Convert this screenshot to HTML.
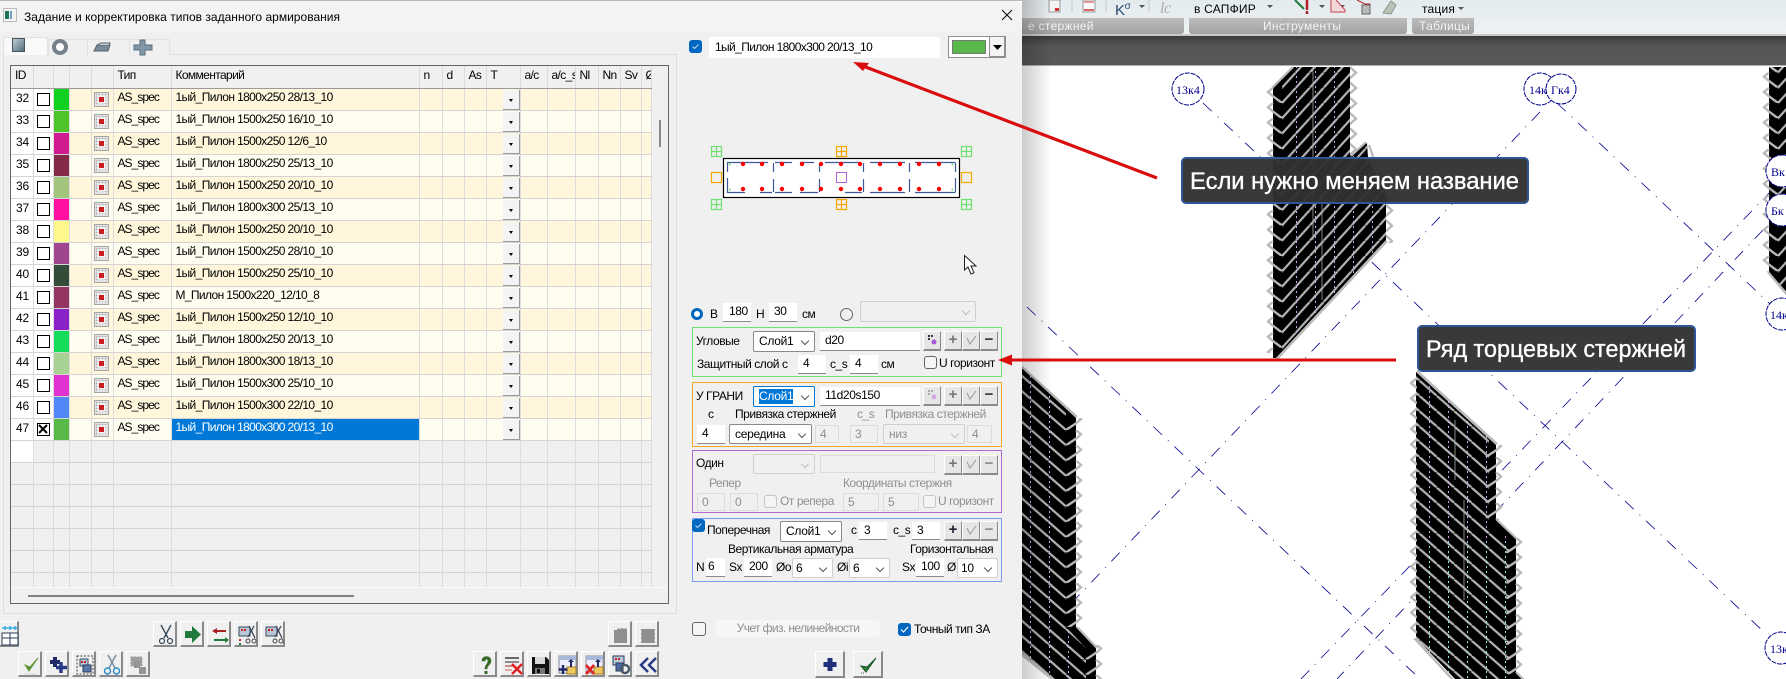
<!DOCTYPE html>
<html><head><meta charset="utf-8">
<style>
html,body{margin:0;padding:0;width:1786px;height:679px;overflow:hidden;background:#fff;font-family:"Liberation Sans","Noto Sans CJK SC",sans-serif;font-size:12px;color:#000}
.a{position:absolute}
.t{position:absolute;white-space:nowrap;line-height:14px;letter-spacing:-.45px}
.g{color:#8f8f8f}
.i{position:absolute;background:#fff;border-bottom:1px solid #8a8a8a;box-sizing:border-box;line-height:17px;padding-left:5px;white-space:nowrap;font-size:12px;letter-spacing:-.4px}
.d{position:absolute;background:#f0f0f0;border:1px solid #dcdcdc;box-sizing:border-box;line-height:17px;padding-left:4px;color:#8f8f8f;white-space:nowrap}
.c{position:absolute;background:#fff;border:1px solid #8a8a8a;border-radius:2px;box-sizing:border-box;line-height:19px;padding-left:5px;white-space:nowrap;letter-spacing:-.3px}
.c:after{content:"";position:absolute;right:6px;top:6px;width:5px;height:5px;border-right:1px solid #555;border-bottom:1px solid #555;transform:rotate(45deg)}
.c.o{background:#f0f0f0;border-color:#cfcfcf;color:#8f8f8f}
.c.o:after{border-color:#c0c0c0}
.b{position:absolute;background:#f0f0f0;box-sizing:border-box;border-top:1px solid #fff;border-left:1px solid #fff;border-right:2px solid #8a8a8a;border-bottom:2px solid #8a8a8a}
.b svg{position:absolute;left:0;top:0}
.s{position:absolute;background:#e6e6e6;box-sizing:border-box;border-top:1px solid #fff;border-left:1px solid #fff;border-right:1px solid #8a8a8a;border-bottom:2px solid #8a8a8a;text-align:center;font-weight:bold;line-height:16px;font-size:15px;color:#333}
.s.o{color:#a8a8a8}
.k{position:absolute;width:13px;height:13px;box-sizing:border-box;border:1px solid #666;border-radius:3px;background:#f5f5f5}
.k.o{border-color:#c4c4c4}
.on{position:absolute;width:13px;height:13px;border-radius:3px;background:#0067c0}
.on svg{position:absolute;left:0;top:0}
.box{position:absolute;left:692px;width:310px;box-sizing:border-box;border:1px solid}
table{position:absolute;left:11px;top:66px;width:640px;border-collapse:collapse;table-layout:fixed}
td{height:21px;padding:0;border-right:1px solid #dcdcdc;border-bottom:1px solid #d4d4d4;position:relative;white-space:nowrap;overflow:hidden;font-size:12px;letter-spacing:-.62px;line-height:14px;vertical-align:top;padding-top:1px;box-sizing:border-box}
tr{height:22px}
tr.h td{background:#f0f0f0;border-bottom:1px solid #9a9a9a;padding-left:4px;padding-top:2px}
tr.p td{background:#fff6dc}
tr.q td{background:#fffdef}
tr.e td{background:#f0f0f0;height:22px}
td.id{background:#fff!important;padding-left:5px;padding-top:2px;letter-spacing:-.2px}
td.w{background:#fff!important}
td.x{padding-left:4px}
td.y{padding-left:4px;letter-spacing:-.95px}
.cbx{position:absolute;left:3px;top:4px;width:13px;height:13px;box-sizing:border-box;border:1px solid #000;background:#fff}
.ic{position:absolute;left:2px;top:3px;width:15px;height:15px;box-sizing:border-box;border:1px solid #a6a6a6;background:radial-gradient(#a8a8a8 .7px,transparent .9px) 0 0/3px 3px,#e8e8e8}
.ic:after{content:"";position:absolute;left:4px;top:4px;width:4px;height:4px;padding:.5px;background:#c81e1e;box-shadow:0 0 0 1.500px #f2f2f2}
.dr{position:absolute;right:0;top:1px;width:17px;height:20px;box-sizing:border-box;background:#f4f4f4;border-right:1px solid #9a9a9a;border-bottom:1px solid #9a9a9a}
.dr:after{content:"";position:absolute;left:6px;top:9px;border-left:2.5px solid transparent;border-right:2.5px solid transparent;border-top:3px solid #000}
</style></head><body>

<!-- Toolbar -->
<div class="a" style="left:1022px;top:0;width:764px;height:35px;background:linear-gradient(#e4ebee,#edf2f3)"></div>
<div class="a" style="left:1000px;top:18px;width:184px;height:16px;background:linear-gradient(#bcbcbc,#a2a2a2);border-radius:0 0 3px 3px"></div>
<div class="a" style="left:1189px;top:18px;width:218px;height:16px;background:linear-gradient(#bcbcbc,#a2a2a2);border-radius:0 0 3px 3px"></div>
<div class="a" style="left:1412px;top:18px;width:62px;height:16px;background:linear-gradient(#bcbcbc,#a2a2a2);border-radius:0 0 3px 3px"></div>
<div class="t" style="left:1028px;top:19px;color:#f4f4f4;letter-spacing:.3px">е стержней</div>
<div class="t" style="left:1263px;top:19px;color:#f4f4f4;letter-spacing:.3px">Инструменты</div>
<div class="t" style="left:1419px;top:19px;color:#f4f4f4;letter-spacing:.3px">Таблицы</div>
<div class="t" style="left:1194px;top:2px;letter-spacing:.2px">в САПФИР</div>
<div class="t" style="left:1422px;top:2px;letter-spacing:.2px">тация</div>
<div class="t" style="left:1115px;top:0;font-size:15px;color:#2a4a70">K<span style="font-size:10px;vertical-align:6px">σ</span></div>
<div class="t" style="left:1160px;top:0;font:italic 16px 'Liberation Serif',serif;color:#aaa">lc</div>
<svg class="a" style="left:1022px;top:0" width="470" height="18" viewBox="1022 0 470 18">
<rect x="1049" y="0" width="11" height="12" fill="#f4f4f4" stroke="#999"/><rect x="1055" y="8" width="4" height="3" fill="#c33"/>
<rect x="1083" y="0" width="12" height="12" fill="#fafafa" stroke="#999"/><path d="M1084 10h10" stroke="#c33" stroke-width="1.5"/><path d="M1084 2h10" stroke="#c33"/>
<path d="M1072 0v12M1106 0v12M1149 0v12" stroke="#c8c8c8"/>
<path d="M1139 5h6l-3 3zM1267 5h6l-3 3zM1319 5h6l-3 3zM1339 5h6l-3 3zM1458 7h6l-3 3z" fill="#555"/>
<path d="M1295 0l9 9" stroke="#1c7a3a" stroke-width="2"/><path d="M1307 0v10M1307 11v3" stroke="#b3202a" stroke-width="2.5"/>
<path d="M1331 0v12h14v-2l-9-10" fill="#f3d9d9" stroke="#c04050"/>
<path d="M1357 0l8 4h5v9h-3" fill="none" stroke="#b3202a"/><rect x="1362" y="5" width="8" height="9" fill="#bbb" stroke="#666"/>
<path d="M1383 13l8-12 5 4-5 9z" fill="#b8c4b8" stroke="#8a9a8a"/>
</svg>
<div class="a" style="left:1022px;top:34px;width:764px;height:2px;background:#c9c9c9"></div>
<div class="a" style="left:1022px;top:36px;width:764px;height:29px;background:linear-gradient(#3c3c3c,#565656 35%,#585858)"></div>
<div class="a" style="left:1022px;top:65px;width:764px;height:1px;background:#b0b0b0"></div>

<!-- Drawing -->
<svg class="a" style="left:0;top:0" width="1786" height="679" viewBox="0 0 1786 679">
<defs>
<pattern id="pa" patternUnits="userSpaceOnUse" x="1282" y="87.7" width="13.9" height="15.3"><path d="M0 15.3L13.9 0M13.9 15.3L27.8 0M-13.9 15.3L0 0" stroke="#b4b4b4" stroke-width="2.2" fill="none"/></pattern>
<pattern id="pd" patternUnits="userSpaceOnUse" x="1778" y="87.7" width="13.9" height="15.3"><path d="M0 15.3L13.9 0M13.9 15.3L27.8 0M-13.9 15.3L0 0" stroke="#b4b4b4" stroke-width="2.2" fill="none"/></pattern>
<pattern id="pb" patternUnits="userSpaceOnUse" x="1066" y="430" width="17.4" height="15.3"><path d="M0 0L17.4 15.3M17.4 0L34.8 15.3M-17.4 0L0 15.3" stroke="#b4b4b4" stroke-width="2.2" fill="none"/></pattern>
<pattern id="pc" patternUnits="userSpaceOnUse" x="1489" y="457" width="17.4" height="15.3"><path d="M0 0L17.4 15.3M17.4 0L34.8 15.3M-17.4 0L0 15.3" stroke="#b4b4b4" stroke-width="2.2" fill="none"/></pattern>
<pattern id="sl" patternUnits="userSpaceOnUse" x="1266" y="87.7" width="18" height="15.3"><path d="M7 0L2 4.3L7 8.6L16 15.3L18 13.5" stroke="#b9b9b9" stroke-width="2.4" fill="none"/></pattern>
<pattern id="sd" patternUnits="userSpaceOnUse" x="1762" y="87.7" width="18" height="15.3"><path d="M7 0L2 4.3L7 8.6L16 15.3L18 13.5" stroke="#b9b9b9" stroke-width="2.4" fill="none"/></pattern>
<pattern id="sr" patternUnits="userSpaceOnUse" x="1350" y="80.5" width="8" height="15.3"><path d="M0 2L6 7.5L0 13" stroke="#b9b9b9" stroke-width="2.4" fill="none"/></pattern>
<pattern id="sr2" patternUnits="userSpaceOnUse" x="1386" y="80.5" width="8" height="15.3"><path d="M0 2L6 7.5L0 13" stroke="#b9b9b9" stroke-width="2.4" fill="none"/></pattern>
<pattern id="sc" patternUnits="userSpaceOnUse" x="1410" y="377" width="7" height="15.3"><path d="M7 1L1 6L7 11" stroke="#b9b9b9" stroke-width="2.4" fill="none"/></pattern>
<pattern id="rb" patternUnits="userSpaceOnUse" x="1062" y="414.7" width="22" height="15.3"><path d="M4 15.3L14 8.7L19 4.3L14 0" stroke="#b9b9b9" stroke-width="2.4" fill="none"/></pattern>
<pattern id="rb2" patternUnits="userSpaceOnUse" x="1082" y="414.7" width="22" height="15.3"><path d="M4 15.3L14 8.7L19 4.3L14 0" stroke="#b9b9b9" stroke-width="2.4" fill="none"/></pattern>
<pattern id="rc" patternUnits="userSpaceOnUse" x="1482" y="441.7" width="22" height="15.3"><path d="M4 15.3L14 8.7L19 4.3L14 0" stroke="#b9b9b9" stroke-width="2.4" fill="none"/></pattern>
<pattern id="rc2" patternUnits="userSpaceOnUse" x="1502" y="537.7" width="22" height="15.3"><path d="M4 15.3L14 8.7L19 4.3L14 0" stroke="#b9b9b9" stroke-width="2.4" fill="none"/></pattern>
<pattern id="dp" patternUnits="userSpaceOnUse" x="0" y="0" width="19" height="5"><rect x="4" y="1" width="1" height="2" fill="#d2a8f4"/></pattern>
<pattern id="dc" patternUnits="userSpaceOnUse" x="0" y="0" width="19" height="5"><rect x="4" y="1" width="1" height="2" fill="#8af0e8"/></pattern>
<clipPath id="ca"><polygon points="1282,79 1294,67 1350,67 1350,155 1367,143 1368,157 1386,197 1386,240 1282,352"/></clipPath>
<clipPath id="cd"><polygon points="1778,67 1790,67 1790,296 1778,283"/></clipPath>
<clipPath id="cb"><polygon points="1022,368 1066,408 1066,627 1086,648 1086,679 1054,679 1022,653"/></clipPath>
<clipPath id="cc"><polygon points="1416,372 1489,438 1489,520 1509,538 1509,679 1455,679 1416,638"/></clipPath>
</defs>

<!-- blue axis lines -->
<g stroke="#00008b" stroke-width=".8" stroke-dasharray="12 8 1 8" fill="none">
<path d="M1203 103L1765 633"/>
<path d="M1557 103L1770 304"/>
<path d="M1540 112L1022 655"/>
<path d="M1027 307L1420 679"/>
<path d="M1772 190L1301 679"/>
<path d="M1763 230L1337 679"/>
</g>

<!-- Shape A -->
<polygon points="1273,88 1294,67 1350,67 1350,155 1367,143 1368,157 1386,197 1386,240 1276,358 1273,358" fill="#000"/>
<g clip-path="url(#ca)"><rect x="1273" y="66" width="120" height="295" fill="url(#pa)"/></g>
<rect x="1273" y="66" width="115" height="290" fill="url(#dp)" clip-path="url(#ca)"/>
<rect x="1266" y="88" width="18" height="265" fill="url(#sl)"/>
<rect x="1350" y="66" width="8" height="90" fill="url(#sr)"/>
<rect x="1386" y="197" width="8" height="46" fill="url(#sr2)"/>
<path d="M1272 88L1293 67M1387 241L1277 359M1351 156L1366 142M1369 145L1387 196" stroke="#b9b9b9" stroke-width="2.2" fill="none"/>
<path d="M1313 67V240M1322 200V300" stroke="#a8a8a8" stroke-width=".8"/>

<!-- Shape D -->
<polygon points="1769,67 1790,67 1790,296 1769,272" fill="#000"/>
<rect x="1770" y="66" width="20" height="230" fill="url(#pd)" clip-path="url(#cd)"/>
<rect x="1762" y="67" width="18" height="205" fill="url(#sd)"/>
<path d="M1768 272L1788 296" stroke="#b9b9b9" stroke-width="2.2"/>

<!-- Shape B -->
<polygon points="1022,368 1076,418 1076,627 1096,648 1096,679 1054,679 1022,653" fill="#000"/>
<rect x="1022" y="366" width="72" height="313" fill="url(#pb)" clip-path="url(#cb)"/>
<rect x="1022" y="366" width="72" height="313" fill="url(#dp)" clip-path="url(#cb)"/>
<rect x="1062" y="418" width="22" height="209" fill="url(#rb)"/>
<rect x="1082" y="645" width="22" height="34" fill="url(#rb2)"/>
<path d="M1022 367L1077 417M1077 627L1097 648M1021 654L1053 680" stroke="#b9b9b9" stroke-width="2.2" fill="none"/>

<!-- Shape C -->
<polygon points="1416,372 1496,445 1496,520 1516,538 1516,673 1523,679 1455,679 1416,638" fill="#000"/>
<rect x="1416" y="372" width="100" height="307" fill="url(#pc)" clip-path="url(#cc)"/>
<rect x="1416" y="372" width="100" height="170" fill="url(#dp)" clip-path="url(#cc)"/>
<rect x="1416" y="542" width="100" height="137" fill="url(#dc)" clip-path="url(#cc)"/>
<rect x="1410" y="378" width="7" height="262" fill="url(#sc)"/>
<rect x="1482" y="445" width="22" height="75" fill="url(#rc)"/>
<rect x="1502" y="538" width="22" height="136" fill="url(#rc2)"/>
<path d="M1417 371L1497 444M1497 520L1517 539M1415 639L1453 680M1516 672L1524 680" stroke="#b9b9b9" stroke-width="2.2" fill="none"/>
<path d="M1455 420V480M1464 500V600" stroke="#a8a8a8" stroke-width=".8"/>

<!-- Axis circles -->
<g fill="#fff" stroke="#00008b" stroke-width="1" stroke-dasharray="5 1">
<circle cx="1188" cy="89" r="16"/><circle cx="1540" cy="89" r="16"/><circle cx="1561" cy="89" r="15"/>
<circle cx="1782" cy="171" r="16"/><circle cx="1782" cy="210" r="16"/><circle cx="1782" cy="314" r="16"/><circle cx="1781" cy="648" r="16"/>
</g>
<g fill="#00008b" font-family="'Liberation Serif',serif" font-size="12">
<text x="1176" y="94">13к4</text><text x="1529" y="94">14к</text><text x="1551" y="94">Гк4</text>
<text x="1771" y="176">Вк</text><text x="1771" y="215">Бк</text><text x="1770" y="319">14к</text><text x="1770" y="653">13к</text>
</g>
</svg>

<!-- dialog shadow -->
<div class="a" style="left:1022px;top:0;width:30px;height:679px;background:linear-gradient(90deg,rgba(0,0,0,.2),rgba(0,0,0,0))"></div>

<!-- Dialog -->
<div class="a" style="left:0;top:1px;width:1022px;height:678px;background:#f0f0f0;border-radius:0 7px 0 0;overflow:hidden">
<div class="a" style="left:0;top:0;width:1022px;height:31px;background:#f3f3f3"></div>
</div>
<div class="a" style="left:0;top:0;width:1022px;height:1px;background:#b8b8b8"></div>
<svg class="a" style="left:3px;top:8px" width="14" height="14"><rect x=".5" y=".5" width="13" height="13" fill="#f4f4f4" stroke="#bbb"/><rect x="2" y="3" width="4" height="8" fill="#1f6f5a"/><rect x="7" y="3" width="2" height="8" fill="#6aa0c8"/></svg>
<svg class="a" style="left:24px;top:8px" width="330" height="18"><text x="0" y="13" font-family="'Liberation Sans',sans-serif" font-size="12" textLength="316" lengthAdjust="spacing">Задание и корректировка типов заданного армирования</text></svg>
<svg class="a" style="left:1001px;top:9px" width="12" height="12"><path d="M1 1L11 11M11 1L1 11" stroke="#111" stroke-width="1.1"/></svg>

<!-- Tabs and panel -->
<div class="a" style="left:3px;top:54px;width:674px;height:560px;box-sizing:border-box;border:1px solid #dedede;background:#f0f0f0"></div>
<div class="a" style="left:48px;top:39px;width:40px;height:16px;background:#f0f0f0;border:1px solid #e2e2e2;border-bottom:0;box-sizing:border-box"></div>
<div class="a" style="left:87px;top:39px;width:43px;height:16px;background:#f0f0f0;border:1px solid #e2e2e2;border-bottom:0;box-sizing:border-box"></div>
<div class="a" style="left:129px;top:39px;width:41px;height:16px;background:#f0f0f0;border:1px solid #e2e2e2;border-bottom:0;box-sizing:border-box"></div>
<div class="a" style="left:3px;top:37px;width:45px;height:18px;background:#f9f9f9;border:1px solid #e2e2e2;border-bottom:0;box-sizing:border-box"></div>
<svg class="a" style="left:0;top:30px" width="180" height="28" viewBox="0 30 180 28">
<defs><linearGradient id="gs" x1="0" y1="0" x2="1" y2="1"><stop offset="0" stop-color="#c6d0d6"/><stop offset="1" stop-color="#4d6a78"/></linearGradient></defs>
<rect x="12.500" y="38.500" width="12" height="13" fill="url(#gs)" stroke="#44545c"/>
<circle cx="60" cy="47" r="6" fill="#fff" stroke="#76808a" stroke-width="4"/>
<path d="M94 51l3-6h13l-2 6z" fill="#7a8a96" stroke="#55626c"/><path d="M97 45l4-2h9l-1 2" fill="#c8d0d6" stroke="#55626c"/>
<path d="M140 40h5v5h7v5h-7v5h-5v-5h-4h-2v-5h6z" fill="#8098a8" stroke="#5a6e7c"/>
</svg>

<!-- Grid frame -->
<div class="a" style="left:10px;top:65px;width:659px;height:539px;box-sizing:border-box;border:1px solid #666;background:#f0f0f0"></div>
<table>
<colgroup><col style="width:22px"><col style="width:20px"><col style="width:16px"><col style="width:22px"><col style="width:22px"><col style="width:58px"><col style="width:248px"><col style="width:23px"><col style="width:22px"><col style="width:22px"><col style="width:34px"><col style="width:27px"><col style="width:28px"><col style="width:23px"><col style="width:22px"><col style="width:21px"><col style="width:10px"></colgroup>
<tr class="h"><td>ID</td><td></td><td></td><td></td><td></td><td>Тип</td><td>Комментарий</td><td>n</td><td>d</td><td>As</td><td>T</td><td>a/c</td><td>a/c_s</td><td>Nl</td><td>Nn</td><td>Sv</td><td>Ø</td></tr>
<tr class="p"><td class="id">32</td><td class="w"><div class="cbx"></div></td><td style="background:#10d020"></td><td></td><td><div class="ic"></div></td><td class="y">AS_spec</td><td class="x">1ый_Пилон 1800x250 28/13_10</td><td></td><td></td><td></td><td><div class="dr"></div></td><td></td><td></td><td></td><td></td><td></td><td></td></tr>
<tr class="q"><td class="id">33</td><td class="w"><div class="cbx"></div></td><td style="background:#4fc42a"></td><td></td><td><div class="ic"></div></td><td class="y">AS_spec</td><td class="x">1ый_Пилон 1500x250 16/10_10</td><td></td><td></td><td></td><td><div class="dr"></div></td><td></td><td></td><td></td><td></td><td></td><td></td></tr>
<tr class="p"><td class="id">34</td><td class="w"><div class="cbx"></div></td><td style="background:#d01a90"></td><td></td><td><div class="ic"></div></td><td class="y">AS_spec</td><td class="x">1ый_Пилон 1500x250 12/6_10</td><td></td><td></td><td></td><td><div class="dr"></div></td><td></td><td></td><td></td><td></td><td></td><td></td></tr>
<tr class="q"><td class="id">35</td><td class="w"><div class="cbx"></div></td><td style="background:#832a48"></td><td></td><td><div class="ic"></div></td><td class="y">AS_spec</td><td class="x">1ый_Пилон 1800x250 25/13_10</td><td></td><td></td><td></td><td><div class="dr"></div></td><td></td><td></td><td></td><td></td><td></td><td></td></tr>
<tr class="p"><td class="id">36</td><td class="w"><div class="cbx"></div></td><td style="background:#a2c47c"></td><td></td><td><div class="ic"></div></td><td class="y">AS_spec</td><td class="x">1ый_Пилон 1500x250 20/10_10</td><td></td><td></td><td></td><td><div class="dr"></div></td><td></td><td></td><td></td><td></td><td></td><td></td></tr>
<tr class="q"><td class="id">37</td><td class="w"><div class="cbx"></div></td><td style="background:#ff10a0"></td><td></td><td><div class="ic"></div></td><td class="y">AS_spec</td><td class="x">1ый_Пилон 1800x300 25/13_10</td><td></td><td></td><td></td><td><div class="dr"></div></td><td></td><td></td><td></td><td></td><td></td><td></td></tr>
<tr class="p"><td class="id">38</td><td class="w"><div class="cbx"></div></td><td style="background:#fff88a"></td><td></td><td><div class="ic"></div></td><td class="y">AS_spec</td><td class="x">1ый_Пилон 1500x250 20/10_10</td><td></td><td></td><td></td><td><div class="dr"></div></td><td></td><td></td><td></td><td></td><td></td><td></td></tr>
<tr class="q"><td class="id">39</td><td class="w"><div class="cbx"></div></td><td style="background:#a0468e"></td><td></td><td><div class="ic"></div></td><td class="y">AS_spec</td><td class="x">1ый_Пилон 1500x250 28/10_10</td><td></td><td></td><td></td><td><div class="dr"></div></td><td></td><td></td><td></td><td></td><td></td><td></td></tr>
<tr class="p"><td class="id">40</td><td class="w"><div class="cbx"></div></td><td style="background:#344d38"></td><td></td><td><div class="ic"></div></td><td class="y">AS_spec</td><td class="x">1ый_Пилон 1500x250 25/10_10</td><td></td><td></td><td></td><td><div class="dr"></div></td><td></td><td></td><td></td><td></td><td></td><td></td></tr>
<tr class="q"><td class="id">41</td><td class="w"><div class="cbx"></div></td><td style="background:#963464"></td><td></td><td><div class="ic"></div></td><td class="y">AS_spec</td><td class="x">М_Пилон 1500x220_12/10_8</td><td></td><td></td><td></td><td><div class="dr"></div></td><td></td><td></td><td></td><td></td><td></td><td></td></tr>
<tr class="p"><td class="id">42</td><td class="w"><div class="cbx"></div></td><td style="background:#8a22c8"></td><td></td><td><div class="ic"></div></td><td class="y">AS_spec</td><td class="x">1ый_Пилон 1500x250 12/10_10</td><td></td><td></td><td></td><td><div class="dr"></div></td><td></td><td></td><td></td><td></td><td></td><td></td></tr>
<tr class="q"><td class="id">43</td><td class="w"><div class="cbx"></div></td><td style="background:#14dc5a"></td><td></td><td><div class="ic"></div></td><td class="y">AS_spec</td><td class="x">1ый_Пилон 1800x250 20/13_10</td><td></td><td></td><td></td><td><div class="dr"></div></td><td></td><td></td><td></td><td></td><td></td><td></td></tr>
<tr class="p"><td class="id">44</td><td class="w"><div class="cbx"></div></td><td style="background:#a8d294"></td><td></td><td><div class="ic"></div></td><td class="y">AS_spec</td><td class="x">1ый_Пилон 1800x300 18/13_10</td><td></td><td></td><td></td><td><div class="dr"></div></td><td></td><td></td><td></td><td></td><td></td><td></td></tr>
<tr class="q"><td class="id">45</td><td class="w"><div class="cbx"></div></td><td style="background:#e032d0"></td><td></td><td><div class="ic"></div></td><td class="y">AS_spec</td><td class="x">1ый_Пилон 1500x300 25/10_10</td><td></td><td></td><td></td><td><div class="dr"></div></td><td></td><td></td><td></td><td></td><td></td><td></td></tr>
<tr class="p"><td class="id">46</td><td class="w"><div class="cbx"></div></td><td style="background:#5088f8"></td><td></td><td><div class="ic"></div></td><td class="y">AS_spec</td><td class="x">1ый_Пилон 1500x300 22/10_10</td><td></td><td></td><td></td><td><div class="dr"></div></td><td></td><td></td><td></td><td></td><td></td><td></td></tr>
<tr class="q"><td class="id">47</td><td class="w"><div class="cbx" style="border-width:1.5px"><svg width="10" height="10" style="position:absolute;left:0;top:0"><path d="M1 1L9 9M9 1L1 9" stroke="#000" stroke-width="2"/></svg></div></td><td style="background:#58b848"></td><td></td><td><div class="ic"></div></td><td class="y">AS_spec</td><td class="x" style="background:#0078d7;color:#fff">1ый_Пилон 1800x300 20/13_10</td><td></td><td></td><td></td><td><div class="dr"></div></td><td></td><td></td><td></td><td></td><td></td><td></td></tr>
<tr class="e"><td class="w"></td><td></td><td></td><td></td><td></td><td></td><td></td><td></td><td></td><td></td><td></td><td></td><td></td><td></td><td></td><td></td><td></td></tr>
<tr class="e"><td></td><td></td><td></td><td></td><td></td><td></td><td></td><td></td><td></td><td></td><td></td><td></td><td></td><td></td><td></td><td></td><td></td></tr>
<tr class="e"><td></td><td></td><td></td><td></td><td></td><td></td><td></td><td></td><td></td><td></td><td></td><td></td><td></td><td></td><td></td><td></td><td></td></tr>
<tr class="e"><td></td><td></td><td></td><td></td><td></td><td></td><td></td><td></td><td></td><td></td><td></td><td></td><td></td><td></td><td></td><td></td><td></td></tr>
<tr class="e"><td></td><td></td><td></td><td></td><td></td><td></td><td></td><td></td><td></td><td></td><td></td><td></td><td></td><td></td><td></td><td></td><td></td></tr>
<tr class="e"><td></td><td></td><td></td><td></td><td></td><td></td><td></td><td></td><td></td><td></td><td></td><td></td><td></td><td></td><td></td><td></td><td></td></tr>
<tr class="e" style="height:15px"><td style="height:15px"></td><td style="height:15px"></td><td style="height:15px"></td><td style="height:15px"></td><td style="height:15px"></td><td style="height:15px"></td><td style="height:15px"></td><td style="height:15px"></td><td style="height:15px"></td><td style="height:15px"></td><td style="height:15px"></td><td style="height:15px"></td><td style="height:15px"></td><td style="height:15px"></td><td style="height:15px"></td><td style="height:15px"></td><td style="height:15px"></td></tr>
</table>
<div class="a" style="left:11px;top:587px;width:657px;height:1px;background:#fafafa"></div>
<div class="a" style="left:28px;top:595px;width:326px;height:2px;background:#808080"></div>
<div class="a" style="left:659px;top:120px;width:2px;height:27px;background:#8a8a8a"></div>

<!-- Bottom left buttons -->
<div class="b" style="left:-5px;top:621px;width:24px;height:26px"><svg width="24" height="26"><path d="M6 6h16M9 4v4M14 4v4M19 4v4" stroke="#1ea0e0" stroke-width="1.2"/><rect x="6" y="11" width="16" height="12" fill="#fff" stroke="#2a3a5a"/><path d="M6 16h16M14 11v12" stroke="#2a3a5a"/></svg></div>
<div class="b" style="left:153px;top:621px;width:24px;height:26px"><svg width="24" height="26"><path d="M7 3l7 13M17 3l-7 13" stroke="#3a4a5a" stroke-width="1.4"/><circle cx="8" cy="19" r="2.500" fill="none" stroke="#3a4a5a" stroke-width="1.2"/><circle cx="16" cy="19" r="2.500" fill="none" stroke="#3a4a5a" stroke-width="1.2"/></svg></div>
<div class="b" style="left:180px;top:621px;width:24px;height:26px"><svg width="24" height="26"><path d="M4 9h7V4l9 8.500-9 8.500v-5H4z" fill="#1f7a3c"/></svg></div>
<div class="b" style="left:207px;top:621px;width:24px;height:26px"><svg width="24" height="26"><path d="M18 8H9V6l-5 3 5 3v-2h9z" fill="#a82222"/><path d="M6 17h11v-2l4 3-4 3v-2H6z" fill="#1f7a3c"/></svg></div>
<div class="b" style="left:234px;top:621px;width:24px;height:26px"><svg width="24" height="26"><rect x="4" y="5" width="11" height="9" fill="#b8c8d8" stroke="#3a4a5a"/><rect x="6" y="7" width="2" height="2" fill="#c22"/><rect x="9" y="7" width="2" height="2" fill="#c22"/><path d="M13 15l6-11M20 16l-6-12" stroke="#3a4a5a" stroke-width="1.300"/><circle cx="13" cy="19" r="2" fill="none" stroke="#444"/><circle cx="19" cy="19" r="2" fill="none" stroke="#444"/><rect x="4" y="17" width="2" height="2" fill="#c22"/><rect x="4" y="21" width="2" height="2" fill="#2a7a3a"/></svg></div>
<div class="b" style="left:261px;top:621px;width:24px;height:26px"><svg width="24" height="26"><rect x="4" y="5" width="11" height="9" fill="#b8c8d8" stroke="#3a4a5a"/><rect x="6" y="7" width="2" height="2" fill="#c22"/><rect x="9" y="7" width="2" height="2" fill="#c22"/><path d="M13 15l6-11M20 16l-6-12" stroke="#3a4a5a" stroke-width="1.300"/><circle cx="13" cy="19" r="2" fill="none" stroke="#444"/><circle cx="19" cy="19" r="2" fill="none" stroke="#444"/></svg></div>
<div class="b" style="left:608px;top:621px;width:24px;height:26px"><svg width="24" height="26"><path d="M5 8h3l1-2 2 1 2-1 2 1 2-1 1 2v13H5z" fill="#8f8f8f"/></svg></div>
<div class="b" style="left:635px;top:621px;width:24px;height:26px"><svg width="24" height="26"><path d="M5 7h14v14H5z" fill="#8f8f8f"/><path d="M5 9v2M5 13v2M5 17v2M19 9v2M19 13v2M19 17v2" stroke="#f0f0f0" stroke-width="1"/></svg></div>

<div class="b" style="left:18px;top:651px;width:24px;height:26px"><svg width="24" height="26"><path d="M6 13l4 6 9-13-8 9z" fill="#4f8a2e" stroke="#6a9a40"/><path d="M6 22h12" stroke="#d0d8cc"/></svg></div>
<div class="b" style="left:45px;top:651px;width:24px;height:26px"><svg width="24" height="26"><path d="M9 5v10M4 10h10" stroke="#1f2a66" stroke-width="4"/><path d="M15 10v11M10 15.500h11" stroke="#2a3a86" stroke-width="3.500"/></svg></div>
<div class="b" style="left:72px;top:651px;width:24px;height:26px"><svg width="24" height="26"><rect x="4" y="4" width="16" height="18" fill="none" stroke="#444" stroke-dasharray="2 1.500"/><rect x="7" y="7" width="8" height="7" fill="#b8c8d8" stroke="#3a4a6a"/><rect x="8" y="9" width="2" height="2" fill="#c22"/><rect x="11" y="9" width="2" height="2" fill="#c22"/><rect x="10" y="13" width="8" height="7" fill="#5a78a8" stroke="#2a3a5a"/></svg></div>
<div class="b" style="left:99px;top:651px;width:24px;height:26px"><svg width="24" height="26"><path d="M8 3l7 13M16 3l-7 13" stroke="#7a8a9a" stroke-width="1.400"/><circle cx="7.500" cy="19" r="3" fill="none" stroke="#2a8ac8" stroke-width="1.400"/><circle cx="16.500" cy="19" r="3" fill="none" stroke="#2a8ac8" stroke-width="1.400"/></svg></div>
<div class="b" style="left:126px;top:651px;width:24px;height:26px"><svg width="24" height="26"><rect x="4" y="5" width="11" height="9" fill="#a0a0a0" stroke="#9a9a9a" stroke-dasharray="2 1"/><path d="M7 9h6v6h6v7h-7v-6H7z" fill="#949494"/></svg></div>

<div class="b" style="left:473px;top:651px;width:24px;height:26px"><svg width="24" height="26"><path d="M8 9c0-6 9-6 9 0 0 4-4 3.500-4 8h-2c0-5 3-4.500 3-8 0-2.500-3-2.500-3 0z" fill="#3a6a2a" stroke="#3a6a2a" stroke-width=".6"/><rect x="10.500" y="19" width="3" height="3" fill="#3a6a2a"/></svg></div>
<div class="b" style="left:500px;top:651px;width:24px;height:26px"><svg width="24" height="26"><path d="M4 6h14" stroke="#3a3a3a" stroke-width="1.500"/><path d="M4 10h14" stroke="#6a6a6a" stroke-width="1.500"/><path d="M4 14h9" stroke="#c86a6a" stroke-width="1.500"/><path d="M4 18h7" stroke="#e08a8a" stroke-width="1.500"/><path d="M11 12l10 10M21 12L11 22" stroke="#e02020" stroke-width="2.500"/></svg></div>
<div class="b" style="left:527px;top:651px;width:24px;height:26px"><svg width="24" height="26"><path d="M4 5h14l3 3v14H4z" fill="#111"/><rect x="7" y="5" width="10" height="7" fill="#d8d8d8"/><rect x="7" y="16" width="10" height="6" fill="#777"/><rect x="9" y="17" width="3" height="4" fill="#111"/></svg></div>
<div class="b" style="left:554px;top:651px;width:24px;height:26px"><svg width="24" height="26"><rect x="4" y="4" width="17" height="17" fill="#eef" stroke="#8a8a9a"/><rect x="4" y="4" width="17" height="4" fill="#a8b8d8"/><path d="M12 15h9v7h-9z" fill="#f0c860" stroke="#a07a20"/><path d="M15 15V10h-2l3-3 3 3h-2v5" fill="#1f2a66"/><path d="M8 13v9M3.500 17.500h9" stroke="#1f2a66" stroke-width="2.500"/></svg></div>
<div class="b" style="left:581px;top:651px;width:24px;height:26px"><svg width="24" height="26"><rect x="4" y="4" width="17" height="17" fill="#eef" stroke="#8a8a9a"/><rect x="4" y="4" width="17" height="4" fill="#a8b8d8"/><path d="M12 15h9v7h-9z" fill="#f0c860" stroke="#a07a20"/><path d="M15 15V10h-2l3-3 3 3h-2v5" fill="#1f2a66"/><path d="M4 13l8 9M12 13l-8 9" stroke="#e02020" stroke-width="2.500"/></svg></div>
<div class="b" style="left:608px;top:651px;width:24px;height:26px"><svg width="24" height="26"><rect x="4" y="4" width="11" height="9" fill="#b8c8d8" stroke="#2a3a5a"/><rect x="6" y="6" width="2" height="2" fill="#c22"/><rect x="9" y="6" width="2" height="2" fill="#c22"/><rect x="7" y="11" width="7" height="8" fill="#4a68a8" stroke="#2a3a5a"/><circle cx="16" cy="17" r="4" fill="none" stroke="#4a5a6a" stroke-width="2.500"/></svg></div>
<div class="b" style="left:635px;top:651px;width:24px;height:26px"><svg width="24" height="26"><path d="M12 6l-7 7 7 7M20 6l-7 7 7 7" fill="none" stroke="#2a3a86" stroke-width="2.500"/></svg></div>

<!-- Right panel top -->
<div class="on" style="left:689px;top:40px"><svg width="13" height="13"><path d="M3.500 6.500l2 2 4-4" fill="none" stroke="#bcd8f4" stroke-width="1"/></svg></div>
<div class="a" style="left:709px;top:37px;width:231px;height:21px;background:#fff;line-height:20px;padding-left:6px;box-sizing:border-box;white-space:nowrap;letter-spacing:-.62px">1ый_Пилон 1800x300 20/13_10</div>
<div class="a" style="left:948px;top:36px;width:42px;height:22px;box-sizing:border-box;background:#fff;border:1px solid #8f8f8f;border-right:0"></div>
<div class="a" style="left:952px;top:40px;width:34px;height:14px;background:#5ab84b;border:1px solid #777;box-sizing:border-box"></div>
<div class="a" style="left:989px;top:36px;width:17px;height:22px;box-sizing:border-box;background:#f4f4f4;border:1px solid #8f8f8f;border-bottom-width:2px;border-right-width:2px"></div>
<svg class="a" style="left:993px;top:45px" width="10" height="6"><path d="M0 0h9L4.500 5z" fill="#000"/></svg>

<!-- Preview -->
<svg class="a" style="left:700px;top:140px" width="285" height="80" viewBox="700 140 285 80">
<g fill="none" stroke="#70e070" stroke-width="1.200">
<rect x="711.500" y="146.500" width="10" height="10"/><path d="M716.500 146v11M711 151.500h11"/>
<rect x="961.500" y="146.500" width="10" height="10"/><path d="M966.500 146v11M961 151.500h11"/>
<rect x="711.500" y="199.500" width="10" height="10"/><path d="M716.500 199v11M711 204.500h11"/>
<rect x="961.500" y="199.500" width="10" height="10"/><path d="M966.500 199v11M961 204.500h11"/>
</g>
<g fill="none" stroke="#f5a800" stroke-width="1.200">
<rect x="836.500" y="146.500" width="10" height="10"/><path d="M841.500 146v11M836 151.500h11"/>
<rect x="836.500" y="199.500" width="10" height="10"/><path d="M841.500 199v11M836 204.500h11"/>
<rect x="711.500" y="172.500" width="10" height="10"/><rect x="961.500" y="172.500" width="10" height="10"/>
</g>
<rect x="723.500" y="158.500" width="236" height="39" fill="#fff" stroke="#000" stroke-width="1.200"/>
<g fill="none" stroke="#3c5a9a" stroke-width="1.200">
<path d="M727.500 178V192.500H745M727.500 172V162.500H768M760 192.500H772M773.500 192V179M773.500 172V163M775 162.500H792M800 162.500H814M775 192.500H792M800 192.500H818M819.500 192V179M819.500 172V163M825 162.500H860M845 192.500H862M863.500 192V179M863.500 172V163M870 162.500H905M870 192.500H905M909.500 192V179M909.500 172V163M915 162.500H955.500M915 192.500H955.500M955.500 163V172M955.500 178V192"/>
</g>
<rect x="836.500" y="172.500" width="10" height="10" fill="none" stroke="#b060d8"/>
<g fill="#f00">
<circle cx="743" cy="164" r="2.200"/><circle cx="762" cy="164" r="2.200"/><circle cx="782" cy="164" r="2.200"/><circle cx="802" cy="164" r="2.200"/><circle cx="821" cy="164" r="2.200"/><circle cx="841" cy="164" r="2.200"/><circle cx="860" cy="164" r="2.200"/><circle cx="880" cy="164" r="2.200"/><circle cx="900" cy="164" r="2.200"/><circle cx="919" cy="164" r="2.200"/><circle cx="939" cy="164" r="2.200"/>
<circle cx="743" cy="189" r="2.200"/><circle cx="762" cy="189" r="2.200"/><circle cx="782" cy="189" r="2.200"/><circle cx="802" cy="189" r="2.200"/><circle cx="821" cy="189" r="2.200"/><circle cx="841" cy="189" r="2.200"/><circle cx="860" cy="189" r="2.200"/><circle cx="880" cy="189" r="2.200"/><circle cx="900" cy="189" r="2.200"/><circle cx="919" cy="189" r="2.200"/><circle cx="939" cy="189" r="2.200"/>
</g>
<path d="M729 163v3l2-1.500zM729 188v3l2-1.500zM953 163v3l-2-1.500zM953 188v3l-2-1.500z" fill="#70e070"/>
</svg>

<!-- Cursor -->
<svg class="a" style="left:960px;top:252px" width="20" height="26" viewBox="960 252 20 26"><path d="M964.500 255.500V270L968 267L971 274L974 272.700L971 266H976Z" fill="#fff" stroke="#222"/></svg>

<!-- B / H row -->
<div class="a" style="left:691px;top:308px;width:12px;height:12px;border-radius:50%;background:#fff;border:3.500px solid #0067c0;box-sizing:border-box"></div>
<div class="t" style="left:710px;top:307px">В</div>
<div class="i" style="left:723px;top:303px;width:28px;height:19px;padding-left:6px">180</div>
<div class="t" style="left:756px;top:307px">Н</div>
<div class="i" style="left:769px;top:303px;width:28px;height:19px;padding-left:5px">30</div>
<div class="t" style="left:802px;top:307px">см</div>
<div class="a" style="left:840px;top:308px;width:13px;height:13px;border-radius:50%;border:1px solid #666;box-sizing:border-box"></div>
<div class="c o" style="left:860px;top:301px;width:116px;height:21px"></div>

<!-- Green -->
<div class="box" style="top:327px;height:50px;border-color:#70e070"></div>
<div class="t" style="left:696px;top:334px">Угловые</div>
<div class="c" style="left:753px;top:331px;width:62px;height:21px">Слой1</div>
<div class="i" style="left:820px;top:332px;width:100px;height:19px;padding-left:5px">d20</div>
<div class="s" style="left:923px;top:331px;width:18px;height:20px"><svg width="16" height="16" style="position:absolute;left:0;top:0"><rect x="4" y="3" width="2" height="2" fill="#334"/><rect x="7" y="3" width="2" height="2" fill="#334"/><rect x="4" y="6" width="2" height="2" fill="#334"/><circle cx="10" cy="10" r="2.500" fill="#a85ad8"/></svg></div>
<div class="s o" style="left:944px;top:331px;width:18px;height:20px;color:#777">+</div>
<div class="s o" style="left:962px;top:331px;width:18px;height:20px;"><svg width="16" height="16" style="position:absolute;left:0;top:0"><path d="M4 6l3 6 6-8" fill="none" stroke="#9a9a9a"/></svg></div>
<div class="s" style="left:980px;top:331px;width:18px;height:20px">−</div>
<div class="t" style="left:697px;top:357px">Защитный слой</div>
<div class="t" style="left:782px;top:357px">с</div>
<div class="i" style="left:798px;top:355px;width:28px;height:19px;">4</div>
<div class="t" style="left:830px;top:357px">c_s</div>
<div class="i" style="left:850px;top:355px;width:28px;height:19px;">4</div>
<div class="t" style="left:881px;top:357px">см</div>
<div class="k" style="left:924px;top:356px"></div>
<div class="t" style="left:939px;top:356px">U горизонт</div>

<!-- Orange -->
<div class="box" style="top:382px;height:65px;border-color:#f7a823"></div>
<div class="t" style="left:696px;top:389px">У ГРАНИ</div>
<div class="c" style="left:753px;top:386px;width:62px;height:21px;border-color:#0078d7;padding-left:5px"><span style="background:#0078d7;color:#fff;display:inline-block;line-height:15px">Слой1</span></div>
<div class="i" style="left:820px;top:387px;width:100px;height:19px;">11d20s150</div>
<div class="s o" style="left:923px;top:386px;width:18px;height:20px"><svg width="16" height="16" style="position:absolute;left:0;top:0"><rect x="4" y="3" width="2" height="2" fill="#aaa"/><rect x="7" y="3" width="2" height="2" fill="#aaa"/><rect x="4" y="6" width="2" height="2" fill="#aaa"/><circle cx="10" cy="10" r="2.500" fill="#cfa8e8"/></svg></div>
<div class="s o" style="left:944px;top:386px;width:18px;height:20px;color:#777">+</div>
<div class="s o" style="left:962px;top:386px;width:18px;height:20px"><svg width="16" height="16" style="position:absolute;left:0;top:0"><path d="M4 6l3 6 6-8" fill="none" stroke="#9a9a9a"/></svg></div>
<div class="s" style="left:980px;top:386px;width:18px;height:20px">−</div>
<div class="t" style="left:708px;top:407px">с</div>
<div class="t" style="left:735px;top:407px">Привязка стержней</div>
<div class="t g" style="left:857px;top:407px">c_s</div>
<div class="t g" style="left:885px;top:407px">Привязка стержней</div>
<div class="i" style="left:697px;top:425px;width:28px;height:19px;">4</div>
<div class="c" style="left:729px;top:424px;width:83px;height:20px;line-height:18px">середина</div>
<div class="d" style="left:815px;top:425px;width:24px;height:18px">4</div>
<div class="d" style="left:850px;top:425px;width:28px;height:18px">3</div>
<div class="c o" style="left:883px;top:424px;width:82px;height:20px;line-height:18px">низ</div>
<div class="d" style="left:967px;top:425px;width:25px;height:18px">4</div>

<!-- Purple -->
<div class="box" style="top:450px;height:63px;border-color:#b06ad4"></div>
<div class="t" style="left:696px;top:456px">Один</div>
<div class="c o" style="left:753px;top:454px;width:62px;height:20px"></div>
<div class="d" style="left:820px;top:455px;width:115px;height:18px"></div>
<div class="s o" style="left:944px;top:455px;width:18px;height:20px;color:#777">+</div>
<div class="s o" style="left:962px;top:455px;width:18px;height:20px"><svg width="16" height="16" style="position:absolute;left:0;top:0"><path d="M4 6l3 6 6-8" fill="none" stroke="#9a9a9a"/></svg></div>
<div class="s o" style="left:980px;top:455px;width:18px;height:20px;color:#888">−</div>
<div class="t g" style="left:709px;top:476px">Репер</div>
<div class="t g" style="left:843px;top:476px">Координаты стержня</div>
<div class="d" style="left:697px;top:493px;width:28px;height:18px">0</div>
<div class="d" style="left:730px;top:493px;width:28px;height:18px">0</div>
<div class="k o" style="left:764px;top:495px"></div>
<div class="t g" style="left:780px;top:494px">От репера</div>
<div class="d" style="left:843px;top:493px;width:36px;height:18px">5</div>
<div class="d" style="left:883px;top:493px;width:36px;height:18px">5</div>
<div class="k o" style="left:923px;top:495px"></div>
<div class="t g" style="left:938px;top:494px">U горизонт</div>

<!-- Blue -->
<div class="box" style="top:518px;height:64px;border-color:#7a9cf0"></div>
<div class="on" style="left:692px;top:519px"><svg width="13" height="13"><path d="M3.500 6.500l2 2 4-4" fill="none" stroke="#bcd8f4" stroke-width="1"/></svg></div>
<div class="t" style="left:707px;top:523px">Поперечная</div>
<div class="c" style="left:780px;top:521px;width:62px;height:21px">Слой1</div>
<div class="t" style="left:851px;top:523px">с</div>
<div class="i" style="left:859px;top:522px;width:28px;height:18px;">3</div>
<div class="t" style="left:893px;top:523px">c_s</div>
<div class="i" style="left:912px;top:522px;width:28px;height:18px;">3</div>
<div class="s" style="left:944px;top:521px;width:18px;height:20px;color:#223">+</div>
<div class="s o" style="left:962px;top:521px;width:18px;height:20px"><svg width="16" height="16" style="position:absolute;left:0;top:0"><path d="M4 6l3 6 6-8" fill="none" stroke="#9a9a9a"/></svg></div>
<div class="s o" style="left:980px;top:521px;width:18px;height:20px;color:#888">−</div>
<div class="t" style="left:728px;top:542px">Вертикальная арматура</div>
<div class="t" style="left:910px;top:542px">Горизонтальная</div>
<div class="t" style="left:696px;top:560px">N</div>
<div class="i" style="left:706px;top:558px;width:19px;height:19px;padding-left:2px">6</div>
<div class="t" style="left:729px;top:560px">Sx</div>
<div class="i" style="left:744px;top:558px;width:28px;height:19px;">200</div>
<div class="t" style="left:776px;top:560px">Øo</div>
<div class="c" style="left:792px;top:558px;width:41px;height:20px;border-color:#cfcfcf;line-height:19px;padding-left:3px">6</div>
<div class="t" style="left:837px;top:560px">Øi</div>
<div class="c" style="left:849px;top:558px;width:41px;height:20px;border-color:#cfcfcf;line-height:19px;padding-left:3px">6</div>
<div class="t" style="left:902px;top:560px">Sx</div>
<div class="i" style="left:916px;top:558px;width:28px;height:19px;padding-left:5px">100</div>
<div class="t" style="left:947px;top:560px">Ø</div>
<div class="c" style="left:957px;top:558px;width:41px;height:20px;border-color:#cfcfcf;line-height:19px;padding-left:3px">10</div>

<!-- bottom -->
<div class="k" style="left:692px;top:622px;width:14px;height:14px"></div>
<div class="a g" style="left:716px;top:620px;width:164px;height:17px;background:#f6f6f6;border-radius:3px;text-align:center;line-height:17px;white-space:nowrap;letter-spacing:-.6px">Учет физ. нелинейности</div>
<div class="on" style="left:898px;top:623px"><svg width="13" height="13"><path d="M3 6.500l2.500 2.500 4.500-5" fill="none" stroke="#fff" stroke-width="1.200"/></svg></div>
<div class="t" style="left:914px;top:622px">Точный тип ЗА</div>
<div class="b" style="left:815px;top:651px;width:30px;height:27px"><svg width="28" height="25"><path d="M14 6v13M7.500 12.500h13" stroke="#1f2f7a" stroke-width="5"/></svg></div>
<div class="b" style="left:853px;top:651px;width:30px;height:27px"><svg width="28" height="25"><path d="M7 14l5 6 10-14-9 9z" fill="#2a7a3a" stroke="#1f5a2a"/><path d="M7 21h4" stroke="#2a6a3a" stroke-dasharray="1 1"/></svg></div>

<!-- Arrows and callouts -->
<svg class="a" style="left:0;top:0;pointer-events:none" width="1786" height="679" viewBox="0 0 1786 679">
<path d="M1157 178L863 66" stroke="#d90d0d" stroke-width="3.200"/>
<polygon points="853,62 869,63 863,71" fill="#d90d0d"/>
<path d="M1396 360H1010" stroke="#d90d0d" stroke-width="3"/>
<polygon points="998,360 1012,354.500 1012,365.500" fill="#d90d0d"/>
<rect x="1182" y="158" width="346" height="45" rx="4" fill="#313131" fill-opacity=".96" stroke="#2f5597" stroke-width="2"/>
<text x="1190" y="189" fill="#fff" stroke="#fff" stroke-width=".35" font-family="'Liberation Sans',sans-serif" font-size="24" textLength="329" lengthAdjust="spacingAndGlyphs">Если нужно меняем название</text>
<rect x="1418" y="326" width="277" height="45" rx="4" fill="#313131" fill-opacity=".96" stroke="#2f5597" stroke-width="2"/>
<text x="1426" y="357" fill="#fff" stroke="#fff" stroke-width=".35" font-family="'Liberation Sans',sans-serif" font-size="24" textLength="260" lengthAdjust="spacingAndGlyphs">Ряд торцевых стержней</text>
</svg>
</body></html>
